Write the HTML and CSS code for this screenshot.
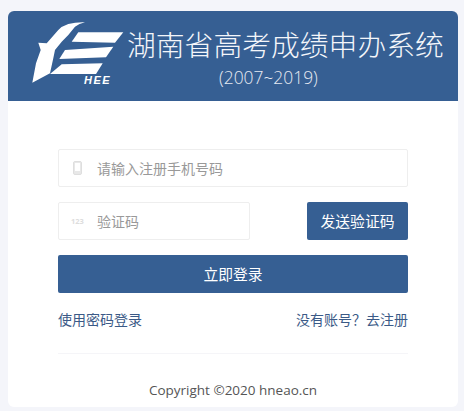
FILE: index.html
```html
<!DOCTYPE html>
<html lang="zh-CN">
<head>
    <meta charset="UTF-8">
    <title>湖南省高考成绩申办系统</title>
    <link rel="stylesheet" href="styles.css">
</head>
<body>
    <div class="card">
        <div class="banner">
            <svg class="logo" width="92" height="74" viewBox="0 0 92 74">
                <path fill="#fff" d="M0.3 60.7 L4 41.3 L8.7 28 L6.3 20.7 L14.7 21.3 L26.3 8 Q30 4 36.3 2 Q44 0 53 0.3 Q47 1.5 43 4.7 L36.3 13 L29.7 19.7 L23 28 L21.3 36.3 L18 51.3 Z"/>
                <path fill="#fff" d="M46.3 10.3 H91.3 L83 20.7 L39.7 19.7 Z"/>
                <path fill="#fff" d="M33 28 L81.3 24.7 L74 35.3 L27.3 37 Z"/>
                <path fill="#fff" d="M29.7 42.3 L70.7 41.3 L64 52 H18 Z"/>
                <text class="logo-text" x="52" y="62">HEE</text>
            </svg>
            <div class="banner-text">
                <div class="banner-title">湖南省高考成绩申办系统</div>
                <div class="banner-years">(2007~2019)</div>
            </div>
        </div>
        <div class="form">
            <div class="field">
                <svg class="field-icon" width="10" height="14" viewBox="0 0 10 14">
                    <rect x="0.5" y="0.5" width="8" height="13" rx="1.5" fill="#e8e8e8" stroke="#dedede"/>
                    <rect x="2" y="2" width="5" height="8" fill="#fff"/>
                </svg>
                <span class="placeholder">请输入注册手机号码</span>
            </div>
            <div class="code-row">
                <div class="field code-field">
                    <span class="field-icon num-icon">123</span>
                    <span class="placeholder">验证码</span>
                </div>
                <div class="btn send-btn">发送验证码</div>
            </div>
            <div class="btn login-btn">立即登录</div>
            <div class="links">
                <a>使用密码登录</a>
                <a>没有账号？去注册</a>
            </div>
            <div class="copyright">Copyright ©2020 hneao.cn</div>
        </div>
    </div>
</body>
</html>
```

FILE: styles.css
```css
:root {
    --blue: #365f93;
    --bg: #f4f5fa;
    --line: #eeeeee;
}
html, body {
    height: 411px;
    overflow: hidden;
}
body {
    margin: 0;
    padding: 11px 6px 0 8px;
    background: var(--bg);
    font-family: "Open Sans", "Noto Sans CJK SC", sans-serif;
    font-size: 14px;
    color: #555;
}
.card {
    background: #fff;
    border-radius: 6px;
    height: 396px;
    overflow: hidden;
}
.banner {
    background: var(--blue);
    height: 90px;
    display: flex;
    padding: 11px 0 0 24px;
    box-sizing: border-box;
    color: #fff;
}
.logo {
    flex: none;
}
.logo-text {
    font-family: "Liberation Sans", sans-serif;
    font-size: 11px;
    font-weight: bold;
    font-style: italic;
    letter-spacing: 1.5px;
    fill: #fff;
}
.banner-text {
    margin-left: 3px;
    text-align: center;
}
.banner-title {
    font-family: "Noto Sans CJK SC", sans-serif;
    font-weight: 300;
    font-size: 28.8px;
    line-height: 40px;
    white-space: nowrap;
    margin-top: 2px;
    color: #f4f6fa;
}
.banner-years {
    font-size: 17.4px;
    font-weight: 300;
    line-height: 20px;
    margin-top: 3px;
    margin-right: 34px;
    color: #e6eaf2;
}
.form {
    padding: 48px 50px 0 50px;
    display: flex;
    flex-direction: column;
}
.field {
    height: 38px;
    box-sizing: border-box;
    border: 1px solid var(--line);
    border-radius: 2px;
    display: flex;
    align-items: center;
    padding-left: 14px;
}
.field-icon {
    flex: none;
    width: 10px;
}
.num-icon {
    font-size: 7.5px;
    font-weight: bold;
    color: #ddd;
    width: 14px;
    margin-left: -2px;
    margin-right: -2px;
}
.placeholder {
    margin-left: 14px;
    color: #999;
    font-family: "Noto Sans CJK SC", sans-serif;
}
.code-row {
    display: flex;
    justify-content: space-between;
    margin-top: 15px;
}
.code-field {
    width: 192px;
}
.btn {
    background: var(--blue);
    color: #fff;
    border-radius: 2px;
    height: 38px;
    display: flex;
    align-items: center;
    justify-content: center;
    font-family: "Noto Sans CJK SC", sans-serif;
    font-size: 14.8px;
    padding-bottom: 2px;
    box-sizing: border-box;
}
.send-btn {
    width: 101px;
}
.login-btn {
    margin-top: 15px;
}
.links {
    display: flex;
    justify-content: space-between;
    margin-top: 16px;
    line-height: 20px;
    color: #3b5a87;
    font-family: "Noto Sans CJK SC", sans-serif;
    padding-bottom: 24px;
    border-bottom: 1px solid #f5f5f8;
}
.copyright {
    text-align: center;
    margin-top: 26px;
    line-height: 20px;
    color: #555;
    font-size: 13.5px;
}
```
